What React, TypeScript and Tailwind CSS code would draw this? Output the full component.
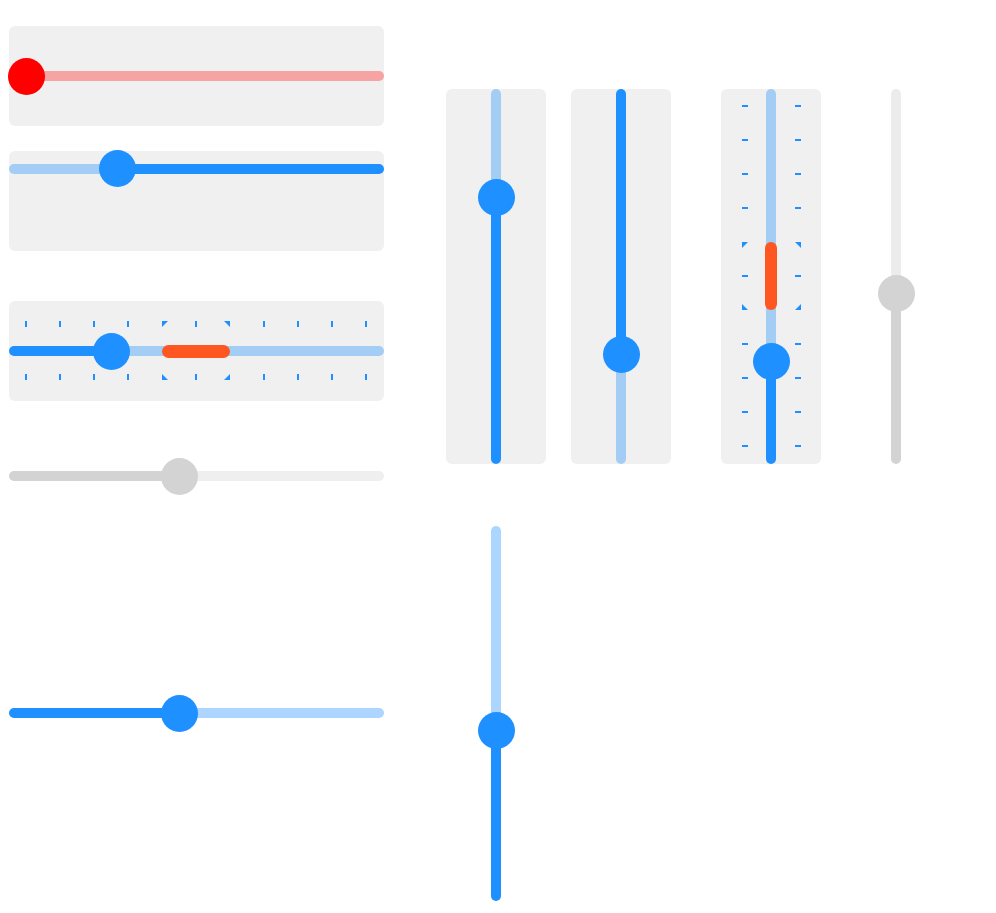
import React from "react";

const BLUE = "#1e90ff";

function Tri({ corner, className, style }: { corner: "tl" | "tr" | "bl" | "br"; className?: string; style?: React.CSSProperties }) {
  const pts =
    corner === "tl" ? "0,0 6,0 0,6" : corner === "tr" ? "0,0 6,0 6,6" : corner === "bl" ? "0,0 0,6 6,6" : "6,0 6,6 0,6";
  return (
    <svg width="6" height="6" viewBox="0 0 6 6" className={className} style={style}>
      <polygon points={pts} fill={BLUE} />
    </svg>
  );
}

type HProps = {
  v: number;
  lowColor: string;
  highColor: string;
  thumb: string;
  children?: React.ReactNode;
};

function HSlider({ v, lowColor, highColor, thumb, children }: HProps) {
  const c = 17 + v * 340;
  return (
    <div className="relative h-[37px] w-[375px] flex items-center">
      <div className="flex h-[10px] w-full overflow-hidden rounded-full">
        <div className={lowColor} style={{ width: c }} />
        <div className={`flex-1 ${highColor}`} />
      </div>
      {children}
      <div
        className={`absolute top-0 h-[37px] w-[37px] rounded-full ${thumb}`}
        style={{ left: c - 18.5 }}
      />
    </div>
  );
}

type VProps = {
  v: number;
  topColor: string;
  bottomColor: string;
  thumb: string;
  children?: React.ReactNode;
};

function VSlider({ v, topColor, bottomColor, thumb, children }: VProps) {
  const c = 17 + (1 - v) * 340;
  return (
    <div className="relative flex h-[375px] w-[100px] justify-center">
      <div className="flex h-full w-[10px] flex-col overflow-hidden rounded-full">
        <div className={topColor} style={{ height: c }} />
        <div className={`flex-1 ${bottomColor}`} />
      </div>
      {children}
      <div
        className={`absolute left-[31.5px] h-[37px] w-[37px] rounded-full ${thumb}`}
        style={{ top: c - 18.5 }}
      />
    </div>
  );
}

export default function App() {
  const ticks = Array.from({ length: 11 }, (_, i) => i);
  return (
    <div className="flex min-h-[913px] w-[996px] bg-white pl-[9px] pt-[26px]" style={{ fontFamily: "Inter, sans-serif" }}>
      {/* Left column */}
      <div className="flex w-[375px] flex-col">
        <div className="flex h-[100px] items-center rounded-md bg-[#f0f0f0]">
          <HSlider v={0} lowColor="bg-[#f5a3a3]" highColor="bg-[#f5a3a3]" thumb="bg-[#ff0000]" />
        </div>

        <div className="mt-[25px] flex h-[100px] items-start rounded-md bg-[#f0f0f0]">
          <div className="-mt-px">
            <HSlider v={0.27} lowColor="bg-[#a3cdf5]" highColor="bg-[#1e90ff]" thumb="bg-[#1e90ff]" />
          </div>
        </div>

        <div className="mt-[50px] flex h-[100px] items-center rounded-md bg-[#f0f0f0]">
          <HSlider v={0.25} lowColor="bg-[#1e90ff]" highColor="bg-[#a3cdf5]" thumb="bg-[#1e90ff]">
            {ticks.map((i) => {
              const x = 17 + i * 34;
              if (i === 4 || i === 6) {
                const left = i === 4;
                const lx = left ? x : x - 6;
                return (
                  <React.Fragment key={i}>
                    <Tri corner={left ? "tl" : "tr"} className="absolute top-[-11.5px]" style={{ left: lx }} />
                    <Tri corner={left ? "bl" : "br"} className="absolute top-[41.5px]" style={{ left: lx }} />
                  </React.Fragment>
                );
              }
              return (
                <React.Fragment key={i}>
                  <div className="absolute top-[-11.5px] h-[6px] w-[1.5px] bg-[#1e90ff]" style={{ left: x - 0.75 }} />
                  <div className="absolute top-[41.5px] h-[6px] w-[1.5px] bg-[#1e90ff]" style={{ left: x - 0.75 }} />
                </React.Fragment>
              );
            })}
            <div className="absolute top-[12px] left-[153px] h-[13px] w-[68px] rounded-full bg-[#ff5722]" />
          </HSlider>
        </div>

        <div className="mt-[50px] flex h-[50px] items-center">
          <HSlider v={0.45} lowColor="bg-[#d3d3d3]" highColor="bg-[#efefef]" thumb="bg-[#d3d3d3]" />
        </div>

        <div className="mt-[187px] flex h-[50px] items-center">
          <HSlider v={0.45} lowColor="bg-[#1e90ff]" highColor="bg-[#acd5ff]" thumb="bg-[#1e90ff]" />
        </div>
      </div>

      {/* Right column */}
      <div className="ml-[62px] flex flex-col pt-[63px]">
        <div className="flex">
          <div className="rounded-md bg-[#f0f0f0]">
            <VSlider v={0.73} topColor="bg-[#a3cdf5]" bottomColor="bg-[#1e90ff]" thumb="bg-[#1e90ff]" />
          </div>
          <div className="ml-[25px] rounded-md bg-[#f0f0f0]">
            <VSlider v={0.27} topColor="bg-[#1e90ff]" bottomColor="bg-[#a3cdf5]" thumb="bg-[#1e90ff]" />
          </div>
          <div className="ml-[50px] rounded-md bg-[#f0f0f0]">
            <VSlider v={0.25} topColor="bg-[#a3cdf5]" bottomColor="bg-[#1e90ff]" thumb="bg-[#1e90ff]">
              {ticks.map((i) => {
                const y = 17 + i * 34;
                if (i === 4 || i === 6) {
                  const top = i === 4;
                  const ty = top ? y : y - 6;
                  return (
                    <React.Fragment key={i}>
                      <Tri corner={top ? "tl" : "bl"} className="absolute left-[21px]" style={{ top: ty }} />
                      <Tri corner={top ? "tr" : "br"} className="absolute left-[74px]" style={{ top: ty }} />
                    </React.Fragment>
                  );
                }
                return (
                  <React.Fragment key={i}>
                    <div className="absolute left-[21px] h-[1.5px] w-[6px] bg-[#1e90ff]" style={{ top: y - 0.75 }} />
                    <div className="absolute left-[74px] h-[1.5px] w-[6px] bg-[#1e90ff]" style={{ top: y - 0.75 }} />
                  </React.Fragment>
                );
              })}
              <div className="absolute left-[44px] top-[153px] h-[68px] w-[12px] rounded-full bg-[#ff5722]" />
            </VSlider>
          </div>
          <div className="ml-[25px]">
            <VSlider v={0.45} topColor="bg-[#ececec]" bottomColor="bg-[#d3d3d3]" thumb="bg-[#d3d3d3]" />
          </div>
        </div>

        <div className="mt-[62px]">
          <VSlider v={0.45} topColor="bg-[#acd5ff]" bottomColor="bg-[#1e90ff]" thumb="bg-[#1e90ff]" />
        </div>
      </div>
    </div>
  );
}
